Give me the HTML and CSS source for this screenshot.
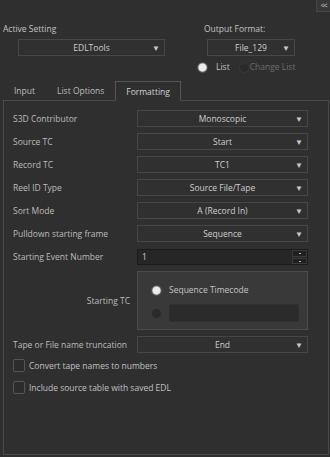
FILE: index.html
```html
<!DOCTYPE html>
<html lang="en">
<head>
    <meta charset="UTF-8">
    <title>EDL Export</title>
    <link rel="stylesheet" href="styles.css">
</head>
<body>
    <div class="window">
        <div class="topbar">
            <button class="collapse-btn">&lt;&lt;</button>
        </div>

        <header class="settings">
            <div class="setting setting-active">
                <div class="setting-label">Active Setting</div>
                <div class="select select-active">EDLTools<span class="arrow">&#9660;</span></div>
            </div>
            <div class="setting setting-output">
                <div class="setting-label">Output Format:</div>
                <div class="select select-output">File_129<span class="arrow">&#9660;</span></div>
                <div class="radio-row">
                    <span class="radio checked"></span><span class="radio-text">List</span>
                    <span class="radio"></span><span class="radio-text disabled">Change List</span>
                </div>
            </div>
        </header>

        <nav class="tabs">
            <div class="tab">Input</div>
            <div class="tab">List Options</div>
            <div class="tab active">Formatting</div>
        </nav>

        <section class="panel">
            <div class="form">
                <label class="field-label">S3D Contributor</label>
                <div class="select">Monoscopic<span class="arrow">&#9660;</span></div>

                <label class="field-label">Source TC</label>
                <div class="select">Start<span class="arrow">&#9660;</span></div>

                <label class="field-label">Record TC</label>
                <div class="select">TC1<span class="arrow">&#9660;</span></div>

                <label class="field-label">Reel ID Type</label>
                <div class="select">Source File/Tape<span class="arrow">&#9660;</span></div>

                <label class="field-label">Sort Mode</label>
                <div class="select">A (Record In)<span class="arrow">&#9660;</span></div>

                <label class="field-label">Pulldown starting frame</label>
                <div class="select">Sequence<span class="arrow">&#9660;</span></div>

                <label class="field-label">Starting Event Number</label>
                <div class="spinbox">
                    <span class="spin-value">1</span>
                    <div class="spin-buttons">
                        <span class="spin-btn"></span>
                        <span class="spin-btn"></span>
                    </div>
                </div>

                <label class="field-label label-right">Starting TC</label>
                <div class="tc-box">
                    <div class="tc-row">
                        <span class="radio checked"></span>
                        <span class="tc-text">Sequence Timecode</span>
                    </div>
                    <div class="tc-row">
                        <span class="radio"></span>
                        <span class="tc-input"></span>
                    </div>
                </div>

                <label class="field-label">Tape or File name truncation</label>
                <div class="select">End<span class="arrow">&#9660;</span></div>
            </div>

            <div class="checks">
                <div class="check-row"><span class="checkbox"></span>Convert tape names to numbers</div>
                <div class="check-row"><span class="checkbox"></span>Include source table with saved EDL</div>
            </div>
        </section>
    </div>
</body>
</html>
```

FILE: styles.css
```css
* {
    margin: 0;
    padding: 0;
    box-sizing: border-box;
}

body {
    background: #2f2f2f;
    color: #c2c2c2;
    font-family: 'Open Sans', 'Noto Sans', sans-serif;
    font-size: 8.5px;
    line-height: 12px;
    overflow: hidden;
}

.window {
    width: 330px;
    height: 457px;
    display: flex;
    flex-direction: column;
}

.topbar {
    height: 22px;
    display: flex;
    justify-content: flex-end;
    align-items: flex-start;
}

.collapse-btn {
    width: 14px;
    height: 12px;
    background: #383838;
    border: 1px solid #474747;
    border-top: none;
    border-right: none;
    color: #d8d8d8;
    font-family: inherit;
    font-size: 7px;
    line-height: 10px;
    letter-spacing: -1px;
}

/* header: active setting + output format */
.settings {
    display: grid;
    grid-template-columns: 200px 1fr;
    height: 59px;
    padding-top: 1px;
}

.setting-label {
    height: 12px;
}

.setting-active .setting-label {
    padding-left: 3px;
}

.setting-output .setting-label {
    padding-left: 4px;
}

.select {
    position: relative;
    height: 17px;
    border: 1px solid #474747;
    background: #303030;
    color: #cfcfcf;
    text-align: center;
    line-height: 15px;
}

.arrow {
    position: absolute;
    right: 4px;
    top: 0;
    font-size: 8px;
    color: #c8c8c8;
}

.select-active {
    margin: 4px 0 0 18px;
    width: 147px;
}

.select-output {
    margin: 4px 0 0 7px;
    width: 88px;
}

.radio-row {
    display: flex;
    align-items: center;
    height: 12px;
    margin: 5px 0 0 -3px;
}

.radio {
    width: 11px;
    height: 11px;
    border-radius: 50%;
    border: 1px solid #3a3a3a;
    background: #2a2a2a;
    flex: none;
}

.radio.checked {
    background: radial-gradient(circle, #ececec 0 3.5px, #8a8a8a 4.5px, #4a4a4a 5.5px);
    border-color: #555;
}

.radio-row .radio.checked {
    margin-right: 8px;
}

.radio-row .radio-text {
    margin-right: 9px;
}

.radio-row .radio:last-of-type {
    margin-right: 8px;
    width: 12px;
    height: 12px;
    border-color: #353535;
}

.disabled {
    color: #6c6c6c;
}

/* tabs */
.tabs {
    display: flex;
    padding-left: 3px;
    height: 20px;
    position: relative;
    z-index: 1;
}

.tab {
    padding: 0 11px;
    line-height: 20px;
    color: #bdbdbd;
}

.tab.active {
    border: 1px solid #555;
    border-bottom: 1px solid #2f2f2f;
    color: #d2d2d2;
    padding: 0 10px;
    height: 20px;
    line-height: 19px;
}

/* panel */
.panel {
    flex: 1;
    margin: -1px 1px 2px 3px;
    border: 1px solid #4a4a4a;
    padding: 9px 0 0 9px;
}

.form {
    display: grid;
    grid-template-columns: 124px 171px;
    row-gap: 6px;
}

.field-label {
    line-height: 17px;
    color: #bcbcbc;
    white-space: nowrap;
}

.label-right {
    text-align: right;
    padding-right: 7px;
    align-self: center;
}

.spinbox {
    height: 16px;
    background: #262626;
    border: 1px solid #1b1b1b;
    display: flex;
    justify-content: space-between;
    margin-top: 1px;
}

.spin-value {
    padding-left: 4px;
    line-height: 14px;
    color: #d0d0d0;
}

.spin-buttons {
    display: flex;
    flex-direction: column;
    gap: 1px;
    width: 15px;
}

.spin-btn {
    flex: 1;
    background: #1f1f1f;
    border: 1px solid #3a3a3a;
    position: relative;
}

.spin-btn::after {
    content: "";
    position: absolute;
    left: 6px;
    top: 2px;
    width: 2px;
    height: 1px;
    background: #bbb;
}

.tc-box {
    height: 59px;
    background: #393939;
    border: 1px solid #4c4c4c;
    padding: 12px 0 0 13px;
    display: flex;
    flex-direction: column;
    gap: 8px;
}

.tc-row {
    display: flex;
    align-items: center;
    gap: 7px;
}

.tc-text {
    color: #c4c4c4;
}

.tc-input {
    width: 130px;
    height: 18px;
    background: #2b2b2b;
    border: 1px solid #303030;
    border-radius: 2px;
}

.checks {
    margin-top: 6px;
    display: flex;
    flex-direction: column;
    gap: 9px;
}

.check-row {
    display: flex;
    align-items: center;
    gap: 4px;
    height: 13px;
    color: #c0c0c0;
}

.checkbox {
    width: 12px;
    height: 13px;
    border: 1px solid #565656;
    border-radius: 2px;
    background: #2c2c2c;
}
```
